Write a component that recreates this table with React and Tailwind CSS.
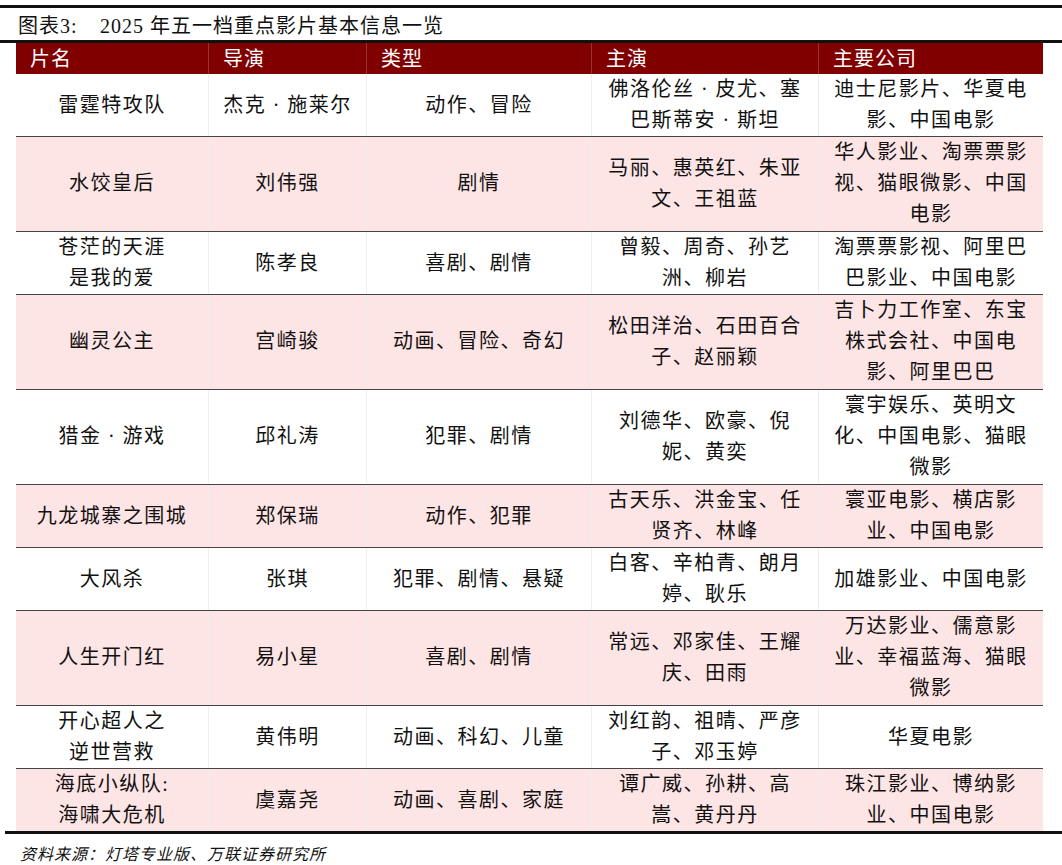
const rows = [
  [["雷霆特攻队"], ["杰克 · 施莱尔"], ["动作、冒险"], ["佛洛伦丝 · 皮尤、塞", "巴斯蒂安 · 斯坦"], ["迪士尼影片、华夏电", "影、中国电影"]],
  [["水饺皇后"], ["刘伟强"], ["剧情"], ["马丽、惠英红、朱亚", "文、王祖蓝"], ["华人影业、淘票票影", "视、猫眼微影、中国", "电影"]],
  [["苍茫的天涯", "是我的爱"], ["陈孝良"], ["喜剧、剧情"], ["曾毅、周奇、孙艺", "洲、柳岩"], ["淘票票影视、阿里巴", "巴影业、中国电影"]],
  [["幽灵公主"], ["宫崎骏"], ["动画、冒险、奇幻"], ["松田洋治、石田百合", "子、赵丽颖"], ["吉卜力工作室、东宝", "株式会社、中国电", "影、阿里巴巴"]],
  [["猎金 · 游戏"], ["邱礼涛"], ["犯罪、剧情"], ["刘德华、欧豪、倪", "妮、黄奕"], ["寰宇娱乐、英明文", "化、中国电影、猫眼", "微影"]],
  [["九龙城寨之围城"], ["郑保瑞"], ["动作、犯罪"], ["古天乐、洪金宝、任", "贤齐、林峰"], ["寰亚电影、横店影", "业、中国电影"]],
  [["大风杀"], ["张琪"], ["犯罪、剧情、悬疑"], ["白客、辛柏青、朗月", "婷、耿乐"], ["加雄影业、中国电影"]],
  [["人生开门红"], ["易小星"], ["喜剧、剧情"], ["常远、邓家佳、王耀", "庆、田雨"], ["万达影业、儒意影", "业、幸福蓝海、猫眼", "微影"]],
  [["开心超人之", "逆世营救"], ["黄伟明"], ["动画、科幻、儿童"], ["刘红韵、祖晴、严彦", "子、邓玉婷"], ["华夏电影"]],
  [["海底小纵队:", "海啸大危机"], ["虞嘉尧"], ["动画、喜剧、家庭"], ["谭广威、孙耕、高", "嵩、黄丹丹"], ["珠江影业、博纳影", "业、中国电影"]],
];

const heads = ["片名", "导演", "类型", "主演", "主要公司"];

export default function App() {
  return (
    <div className="w-[1062px] h-[865px] bg-white text-[#111] pt-[5px]" style={{ fontFamily: '"Liberation Serif", "Noto Sans CJK SC", serif' }}>
      <div className="h-[3px] bg-[#111]" />
      <div className="h-[32px] flex items-center pl-[18px] pt-[3px] text-[20px] tracking-[1px]">
        <span className="w-[82px]">图表3:</span>
        <span>2025 年五一档重点影片基本信息一览</span>
      </div>
      <div className="h-[3px] bg-[#111]" />
      <div className="ml-[16px] w-[1027px]">
        <div className="grid grid-cols-[192px_158px_225px_227px_225px] h-[31px] bg-[#800000] text-white text-[20px] tracking-[1px]">
          {heads.map((h, i) => (
            <div key={h} className={"flex items-center pl-[14px] " + (i > 0 ? "border-l border-[#9a3030]" : "")}>{h}</div>
          ))}
        </div>
        {rows.map((r, ri) => {
          const tall = r.some((c) => c.length > 2);
          return (
            <div
              key={ri}
              className={"grid grid-cols-[192px_158px_225px_227px_225px] border-b border-[#444] text-[20px] leading-[31px] tracking-[1.5px] " + (ri % 2 ? "bg-[#fde4e5] " : "bg-white ") + (tall ? "pb-[1px]" : "")}
            >
              {r.map((cell, ci) => (
                <div key={ci} className={"flex flex-col items-center justify-center text-center " + (ci > 0 ? "border-l border-[#eee]" : "")}>
                  {cell.map((l, li) => (
                    <div key={li} className="whitespace-nowrap">{l}</div>
                  ))}
                </div>
              ))}
            </div>
          );
        })}
      </div>
      <div className="ml-[5px] h-[3px] bg-[#111] -mt-[1px]" />
      <div className="pl-[20px] pt-[9px] text-[16px] italic tracking-[1px]">资料来源：灯塔专业版、万联证券研究所</div>
    </div>
  );
}
